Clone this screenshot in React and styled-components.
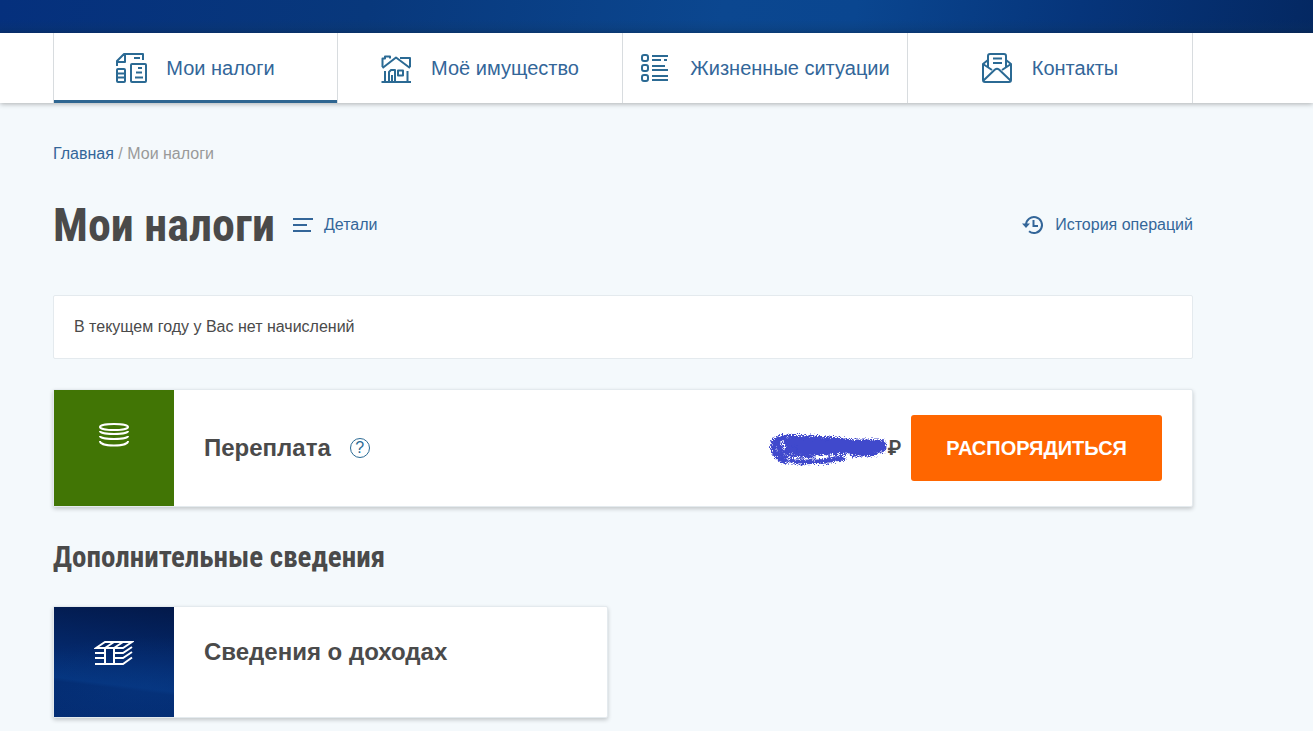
import React from 'react'
import styled, { createGlobalStyle } from 'styled-components'

const menu = [
  { titulo: 'Мои налоги', Icon: IconTaxes },
  { titulo: 'Моё имущество', Icon: IconHouse },
  { titulo: 'Жизненные ситуации', Icon: IconList },
  { titulo: 'Контакты', Icon: IconMail },
]

function IconTaxes() {
  return (
    <NavSvg viewBox='0 0 32 32'>
      <path d='M1 14V9L8 2H27V8M1 10H9V2M18 6H24' />
      <rect x='1' y='17' width='8' height='13' rx='1' />
      <path d='M1 21.5H9M1 25.5H9' />
      <rect x='15' y='12' width='15' height='18' rx='1' />
      <path d='M22 16H26M20 20.5H26M19 25.5H27' />
    </NavSvg>
  )
}

function IconHouse() {
  return (
    <NavSvg viewBox='0 0 32 32'>
      <path d='M1.5 15V6.5H4V4.5H9V6.5M19 6H29V15' />
      <path d='M1.5 16L15 5.5L29 16' />
      <path d='M0.5 30H30M4 19V30M26.5 19V30' />
      <path d='M8 30V20L10 18H14V30M11 23V30' />
      <rect x='17' y='18.5' width='5' height='5' />
    </NavSvg>
  )
}

function IconList() {
  return (
    <NavSvg viewBox='0 0 32 32'>
      <rect x='2' y='3' width='6' height='6' rx='2' />
      <rect x='2' y='13' width='6' height='6' rx='2' />
      <rect x='2' y='23' width='6' height='6' rx='2' />
      <path d='M12 4H28M12 8H21M24 8H27M12 14H25M12 18H28M12 24H28M12 28H28' />
    </NavSvg>
  )
}

function IconMail() {
  return (
    <NavSvg viewBox='0 0 32 32'>
      <path d='M6 8L1 12V28Q1 30 3 30H27Q29 30 29 28V12L24 8' />
      <path d='M6 15V4Q6 2 8 2H22Q24 2 24 4V15M11 6.5H20M11 11H20' />
      <path d='M1 12L10 18M29 12L20 18M1.5 28.5L13 17.5Q15 16 17 17.5L28.5 28.5' />
    </NavSvg>
  )
}

function IconCoins() {
  return (
    <TileSvg width='32' height='26' viewBox='0 0 32 26'>
      <ellipse cx='16' cy='5' rx='14' ry='3' />
      <path d='M2 9C2 13 30 13 30 9M2 14C2 18 30 18 30 14M2 19C2 25 30 25 30 19' />
    </TileSvg>
  )
}

function IconMoney() {
  return (
    <TileSvg width='40' height='28' viewBox='0 -1 40 28'>
      <path d='M2 8L11 2H38L29 8ZM11 8L20 2M20 8L29 2' />
      <path d='M1 13H11M1 18H11M1 24H29L38 17.5M11 8V24M20 8V24M20 13H29L38 7M20 18H29L38 12' />
    </TileSvg>
  )
}

function App() {

  let [ativo, setAtivo] = React.useState(0);

  return (
    <>
      <GlobalStyle />
      <Banner />
      <Nav>
        {menu.map(({ titulo, Icon }, index) => (
          <NavLink href='#' key={index} $ativo={ativo === index} onClick={() => setAtivo(index)}>
            <Icon />
            {titulo}
          </NavLink>
        ))}
      </Nav>

      <Main>
        <Breadcrumbs>
          <a href='#'>Главная</a> / Мои налоги
        </Breadcrumbs>

        <TitleRow>
          <Title>Мои налоги</Title>
          <ActionLink href='#'>
            <svg width='20' height='16' viewBox='0 0 20 16' fill='none' stroke='currentColor' strokeWidth='2'>
              <path d='M0 2H20M0 8H14M0 14H18' />
            </svg>
            Детали
          </ActionLink>
          <HistoryLink href='#'>
            <svg width='22' height='20' viewBox='0 0 22 20' fill='none' stroke='currentColor' strokeWidth='2'>
              <path d='M4 10A8 8 0 1 1 7 16.3M11.5 5V11H16' />
              <path d='M0 8.5H8L4 13Z' fill='currentColor' stroke='none' />
            </svg>
            История операций
          </HistoryLink>
        </TitleRow>

        <Notice>В текущем году у Вас нет начислений</Notice>

        <Card>
          <Tile $cor='#417505'><IconCoins /></Tile>
          <CardBody>
            <CardTitle>Переплата</CardTitle>
            <HelpButton aria-label='Что такое переплата'>?</HelpButton>
            <Amount>
              <Scribble />
              ₽
            </Amount>
            <PayButton>РАСПОРЯДИТЬСЯ</PayButton>
          </CardBody>
        </Card>

        <Subtitle>Дополнительные сведения</Subtitle>

        <IncomeCard>
          <Tile $cor='radial-gradient(ellipse 150px 50px at 80% 72%, #08398580, transparent), linear-gradient(187deg, #03194a, #04286a 45%, #05357f 68%, #032b70 71%, #042c72)'>
            <IconMoney />
          </Tile>
          <IncomeBody>
            <CardTitle>Сведения о доходах</CardTitle>
          </IncomeBody>
        </IncomeCard>
      </Main>
    </>
  )
}

// hand-drawn marker over the amount
function Scribble() {
  return (
    <svg width='120' height='36' viewBox='-1 -1 120 36' fill='none' stroke='#3f48cc' strokeLinecap='round' strokeLinejoin='round'>
      <filter id='grain' x='-5%' y='-10%' width='110%' height='120%'>
        <feTurbulence type='fractalNoise' baseFrequency='0.9' numOctaves='1' seed='4' />
        <feDisplacementMap in='SourceGraphic' scale='9' xChannelSelector='R' yChannelSelector='G' />
      </filter>
      <g filter='url(#grain)'>
        <path d='M22 12L40 10L60 11L85 14L113 14M22 18L50 19L80 17L113 16M86 20L104 20' strokeWidth='11' />
        <path d='M16 7Q5 8 5 17Q6 24 16 30M10 13L14 22L26 18' strokeWidth='6' />
        <path d='M15 5L40 6L60 8M14 26L32 25L46 26M18 30L50 30L76 28M28 32L62 31' strokeWidth='3' />
        <path d='M60 29L74 27' strokeWidth='5' />
      </g>
    </svg>
  )
}

export default App

const GlobalStyle = createGlobalStyle`
  * {
    box-sizing: border-box;
  }
  body {
    margin: 0;
    background-color: #f4f9fc;
    color: #4a4a4a;
    font-family: "Liberation Sans", Arial, sans-serif;
    font-size: 16px;
  }
  a {
    color: #336699;
    text-decoration: none;
  }
`

const Banner = styled.header`
  height: 33px;
  background: linear-gradient(to bottom, transparent 60%, #12345640),
    linear-gradient(100deg, #05307d, #08387c 28%, #0b4790 55%, #0a4690 65%, #06357b 82%, #042862);
`

const Nav = styled.nav`
  display: grid;
  grid-template-columns: repeat(4, 1fr);
  padding: 0 120px 0 53px;
  background-color: #fff;
  box-shadow: 0 1px 5px rgba(0, 0, 0, .3);
`

const NavLink = styled.a`
  display: flex;
  align-items: center;
  justify-content: center;
  gap: 18px;
  height: 70px;
  border-right: solid 1px #d8dcdf;
  box-shadow: ${({ $ativo }) => $ativo ? 'inset 0 -3px #2f6691' : 'none'};
  font-size: 20px;
  &:first-child{
    border-left: solid 1px #d8dcdf;
  }
`

const NavSvg = styled.svg`
  width: 32px;
  height: 32px;
  fill: none;
  stroke: #2b6a94;
  stroke-width: 2;
  stroke-linejoin: round;
`

const TileSvg = styled.svg`
  fill: none;
  stroke: #fff;
  stroke-width: 2;
`

const Main = styled.main`
  padding: 41px 120px 13px 53px;
`

const Breadcrumbs = styled.div`
  line-height: 20px;
  color: #999;
`

const TitleRow = styled.div`
  display: flex;
  align-items: center;
  gap: 18px;
  height: 80px;
  margin: 21px 0 30px;
`

const Title = styled.h1`
  margin: 0;
  font-family: "Roboto Condensed", Roboto, sans-serif;
  font-size: 46px;
  font-weight: 700;
`

const ActionLink = styled.a`
  display: flex;
  align-items: center;
  gap: 11px;
`

const HistoryLink = styled(ActionLink)`
  margin-left: auto;
`

const Notice = styled.section`
  padding: 21px 20px;
  border: solid 1px #e4eaee;
  border-radius: 2px;
  background-color: #fff;
  line-height: 20px;
`

const Card = styled.section`
  display: flex;
  min-height: 118px;
  margin-top: 30px;
  border: solid 1px #e4eaee;
  border-radius: 2px;
  background-color: #fff;
  box-shadow: 0 2px 4px rgba(0, 0, 0, .2);
`

const IncomeCard = styled(Card)`
  width: calc(50% - 15px);
  min-height: 112px;
  margin-top: 0;
`

const Tile = styled.div`
  display: flex;
  justify-content: center;
  align-items: flex-start;
  width: 120px;
  padding-top: 32px;
  background: ${({ $cor }) => $cor};
`

const CardBody = styled.div`
  flex: 1;
  display: flex;
  align-items: center;
  padding: 0 30px;
`

const IncomeBody = styled(CardBody)`
  align-items: flex-start;
  padding-top: 31px;
`

const CardTitle = styled.h3`
  margin: 0;
  font-size: 24px;
  line-height: 28px;
`

const HelpButton = styled.button`
  width: 20px;
  height: 20px;
  margin-left: 19px;
  padding: 0;
  border: solid 1px #2b6a94;
  border-radius: 50%;
  background: none;
  color: #2b6a94;
  font-family: "Liberation Sans", sans-serif;
  font-size: 16px;
  line-height: 16px;
  cursor: pointer;
`

const Amount = styled.div`
  display: flex;
  align-items: center;
  margin-left: auto;
  font-family: Roboto, sans-serif;
  font-size: 20px;
  font-weight: 600;
`

const PayButton = styled.button`
  height: 66px;
  margin-left: 10px;
  padding: 0 35px;
  border: none;
  border-radius: 3px;
  background-color: #ff6600;
  color: #fff;
  font-family: "Liberation Sans", sans-serif;
  font-size: 20px;
  font-weight: 700;
  cursor: pointer;
`

const Subtitle = styled.h2`
  margin: 30px 0 29px;
  font-family: "Roboto Condensed", Roboto, sans-serif;
  font-size: 29px;
  line-height: 40px;
`
